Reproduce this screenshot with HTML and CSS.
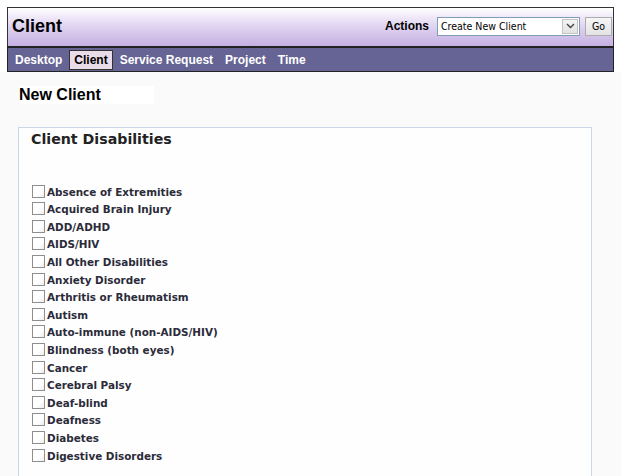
FILE: index.html
```html
<!DOCTYPE html>
<html>
<head>
<meta charset="utf-8">
<link rel="stylesheet" href="styles.css">
</head>
<body>
<div class="frame">
  <div class="header">
    <div class="title">Client</div>
    <div class="actions">
      <span class="actions-label">Actions</span>
      <div class="select"><span class="select-text">Create New Client</span><span class="select-btn"><svg width="9" height="6" viewBox="0 0 9 6"><path d="M1 1 L4.5 4.5 L8 1" fill="none" stroke="#444" stroke-width="1.4"/></svg></span></div>
      <span class="go">Go</span>
    </div>
  </div>
  <div class="nav">
    <span class="nav-item">Desktop</span>
    <span class="nav-item active">Client</span>
    <span class="nav-item">Service Request</span>
    <span class="nav-item">Project</span>
    <span class="nav-item">Time</span>
  </div>
</div>
<div class="content">
  <h2 class="page-title">New Client</h2>
  <div class="panel">
    <h3 class="panel-title">Client Disabilities</h3>
    <ul class="checks">
      <li><span class="box"></span>Absence of Extremities</li>
      <li><span class="box"></span>Acquired Brain Injury</li>
      <li><span class="box"></span>ADD/ADHD</li>
      <li><span class="box"></span>AIDS/HIV</li>
      <li><span class="box"></span>All Other Disabilities</li>
      <li><span class="box"></span>Anxiety Disorder</li>
      <li><span class="box"></span>Arthritis or Rheumatism</li>
      <li><span class="box"></span>Autism</li>
      <li><span class="box"></span>Auto-immune (non-AIDS/HIV)</li>
      <li><span class="box"></span>Blindness (both eyes)</li>
      <li><span class="box"></span>Cancer</li>
      <li><span class="box"></span>Cerebral Palsy</li>
      <li><span class="box"></span>Deaf-blind</li>
      <li><span class="box"></span>Deafness</li>
      <li><span class="box"></span>Diabetes</li>
      <li><span class="box"></span>Digestive Disorders</li>
    </ul>
  </div>
</div>
</body>
</html>
```
FILE: styles.css
```css
html, body {
  margin: 0;
  padding: 0;
  background: #fafafa;
  height: 100%;
  overflow: hidden;
}
body {
  font-family: "Liberation Sans", Arial, sans-serif;
}
.frame {
  background: #fff;
  padding: 7px 7px 0 7px;
}
.header {
  border: 1px solid #333;
  border-bottom: none;
  height: 38px;
  width: 605px;
  background: linear-gradient(#ffffff 0%, #e2d6f2 45%, #c4b0e2 100%);
  display: flex;
  align-items: center;
  justify-content: space-between;
}
.title {
  font-weight: bold;
  font-size: 18px;
  color: #000;
  padding-left: 4px;
  margin-top: -1px;
}
.actions {
  display: flex;
  align-items: center;
  margin-top: -2px;
}
.actions-label {
  font-weight: bold;
  font-size: 12px;
  margin-right: 8px;
}
.select {
  width: 141px;
  height: 17px;
  border: 1px solid #7f9db9;
  background: #fff;
  display: flex;
  align-items: center;
  justify-content: space-between;
}
.select-text {
  font-family: "DejaVu Sans Condensed", Tahoma, sans-serif;
  font-size: 10.5px;
  padding-left: 3px;
  color: #000;
}
.select-btn {
  width: 16px;
  height: 15px;
  margin-right: 1px;
  border: 1px solid #c3c3c3;
  background: linear-gradient(#f4f4f4, #e2e2e2);
  display: flex;
  align-items: center;
  justify-content: center;
  box-sizing: border-box;
}
.go {
  font-family: "DejaVu Sans Condensed", Tahoma, sans-serif;
  font-size: 10.5px;
  width: 27px;
  height: 19px;
  box-sizing: border-box;
  margin-left: 5px;
  margin-right: 1px;
  border: 1px solid #adadad;
  background: linear-gradient(#f6f6f6, #e3e3e3);
  display: flex;
  align-items: center;
  justify-content: center;
}
.nav {
  width: 605px;
  height: 23px;
  border: 1px solid #222;
  border-top: 2px solid #222;
  background: #666495;
  display: flex;
  align-items: center;
}
.nav-item {
  color: #fff;
  font-weight: bold;
  font-size: 12px;
  padding: 3px 5px;
  margin-right: 2px;
  line-height: 14px;
}
.nav-item:first-child { margin-left: 2px; }
.active {
  color: #000;
  background: #eadbe8;
  border: 1px solid #333;
  padding: 2px 4px;
}
.content {
  padding: 14px 0 0 18px;
}
.page-title {
  font-size: 16px;
  font-weight: bold;
  margin: 0 0 0 1px;
  line-height: 18px;
  color: #000;
  width: 135px;
  background: #fff;
}
.panel {
  margin-top: 23px;
  width: 574px;
  height: 400px;
  border: 1px solid #c9d7e6;
  background: #fefefe;
  padding: 0 0 0 12px;
  box-sizing: border-box;
}
.panel-title {
  font-family: "DejaVu Sans", Verdana, sans-serif;
  font-size: 14.2px;
  font-weight: bold;
  color: #222;
  margin: 2px 0 0 0;
  line-height: 18px;
}
.checks {
  list-style: none;
  margin: 33px 0 0 1px;
  padding: 0;
}
.checks li {
  font-family: "DejaVu Sans", Verdana, sans-serif;
  font-size: 10.4px;
  font-weight: bold;
  color: #2b2b3a;
  height: 17.6px;
  display: flex;
  align-items: flex-end;
  line-height: 13px;
}
.box {
  width: 13px;
  height: 13px;
  box-sizing: border-box;
  border: 1px solid #8e8e8e;
  background: linear-gradient(135deg, #ffffff 60%, #ececec);
  margin-right: 2px;
  margin-bottom: 1px;
}
```
